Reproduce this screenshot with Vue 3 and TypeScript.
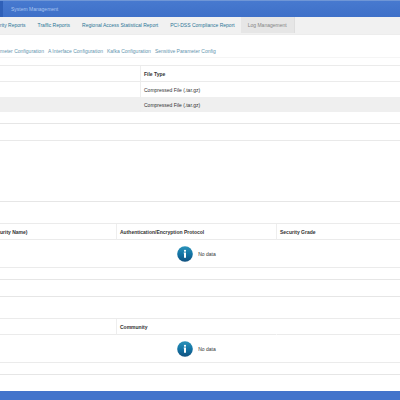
<script setup lang="ts">
interface Tab {
  label: string
  active?: boolean
}

const tabs: Tab[] = [
  { label: 'rity Reports' },
  { label: 'Traffic Reports' },
  { label: 'Regional Access Statistical Report' },
  { label: 'PCI-DSS Compliance Report' },
  { label: 'Log Management', active: true },
]

const links: string[] = [
  'meter Configuration',
  'A Interface Configuration',
  'Kafka Configuration',
  'Sensitive Parameter Config',
]

const files: string[] = ['Compressed File (.tar.gz)', 'Compressed File (.tar.gz)']

const lists = [
  { name: 'users', columns: ['urity Name)', 'Authentication/Encryption Protocol', 'Security Grade'] },
  { name: 'communities', columns: ['', 'Community', ''] },
]
</script>

<template>
  <div class="page">
    <header class="topbar">
      <span class="topbar-edge"></span>
      <a href="#" class="topbar-link">System Management</a>
    </header>

    <nav class="tabs">
      <a v-for="tab in tabs" :key="tab.label" href="#" class="tab" :class="{ active: tab.active }">{{ tab.label }}</a>
    </nav>

    <nav class="links">
      <a v-for="link in links" :key="link" href="#">{{ link }}</a>
    </nav>

    <main class="content">
      <table class="grid files">
        <thead>
          <tr>
            <th class="file-name"></th>
            <th>File Type</th>
          </tr>
        </thead>
        <tbody>
          <tr v-for="(file, i) in files" :key="i">
            <td></td>
            <td>{{ file }}</td>
          </tr>
        </tbody>
      </table>
      <div class="gap"></div>
      <div class="bar"></div>
      <div class="form"></div>

      <section v-for="list in lists" :key="list.name" class="list">
        <div class="toolbar"></div>
        <table class="grid">
          <thead>
            <tr>
              <th v-for="(column, i) in list.columns" :key="i" :class="'col' + i">{{ column }}</th>
            </tr>
          </thead>
          <tbody>
            <tr>
              <td colspan="3" class="empty">
                <div class="notice">
                  <svg viewBox="0 0 16 16" aria-hidden="true">
                    <defs>
                      <linearGradient :id="'info-' + list.name" x1="0" y1="0" x2="0" y2="1">
                        <stop offset="0" stop-color="#2b93b9" />
                        <stop offset="0.5" stop-color="#1374a5" />
                        <stop offset="1" stop-color="#12517f" />
                      </linearGradient>
                    </defs>
                    <circle cx="8" cy="8" r="7.8" :fill="`url(#info-${list.name})`" />
                    <circle cx="8" cy="4.8" r="1.1" fill="#fff" />
                    <path d="M6.7 6.6h2.3v5.2H7V7.5h-.3z" fill="#fff" />
                  </svg>
                  <span>No data</span>
                </div>
              </td>
            </tr>
          </tbody>
        </table>
        <div class="divider"></div>
      </section>
    </main>

    <footer class="footer"></footer>
  </div>
</template>

<style>
body {
  margin: 0;
}
</style>

<style scoped>
.page {
  display: flex;
  flex-direction: column;
  min-height: 100vh;
  overflow: hidden;
  background: #fff;
  color: #333;
  font: 5px/8px "Liberation Sans", Arial, sans-serif;
}

.page * {
  box-sizing: border-box;
}

a {
  text-decoration: none;
  white-space: nowrap;
}

.topbar {
  display: flex;
  align-items: center;
  gap: 8px;
  height: 17px;
  border-top: 1px solid #6f96d6;
  background: linear-gradient(#4779cf, #3e70c8);
}

.topbar-edge {
  width: 3px;
  height: 100%;
  background: #2f60b8;
}

.topbar-link {
  color: #a9c5f0;
}

.tabs {
  display: flex;
  height: 18px;
  padding-bottom: 1px;
  border-bottom: 1px solid #ededed;
  background: #f1f1f1;
}

.tab {
  padding: 4px 6px;
  color: #2c7697;
}

.tab:first-child {
  padding-left: 0;
}

.tab.active {
  padding: 4px 7px;
  border-right: 1px solid #dedede;
  background: #e6e6e6;
  color: #858585;
}

.links {
  display: flex;
  gap: 4px;
  height: 23px;
  margin-bottom: 7px;
  padding-top: 12px;
  border-bottom: 1px solid #f5f5f5;
}

.links a {
  color: #6594ae;
}

.content {
  flex: 1;
}

.grid {
  width: 100%;
  border-top: 1px solid #ebebeb;
  border-spacing: 0;
  table-layout: fixed;
}

.grid th,
.grid td {
  height: 15px;
  padding: 0 3px;
  text-align: left;
  white-space: nowrap;
}

.grid th {
  height: 16px;
  border-bottom: 1px solid #ebebeb;
}

.grid th:first-child {
  padding-left: 0;
}

.grid th + th,
.files td + td {
  border-left: 1px solid #eee;
}

.files tbody tr:nth-child(even) {
  background: #efefef;
}

.file-name {
  width: 35%;
}

.col0 {
  width: 29%;
}

.col1 {
  width: 40%;
}

.list + .list .grid th + th + th {
  border-left-color: transparent;
}

.gap {
  height: 11px;
}

.bar {
  height: 18px;
  border-top: 1px solid #e6e6e6;
  border-bottom: 1px solid #e9e9e9;
}

.form {
  height: 60px;
}

.toolbar {
  height: 22px;
  border-top: 1px solid #e6e6e6;
}

.grid .empty {
  height: 28px;
  border-bottom: 1px solid #ebebeb;
}

.notice {
  display: flex;
  align-items: center;
  justify-content: center;
  gap: 5px;
  padding-right: 7px;
}

.notice svg {
  width: 16px;
  height: 16px;
}

.divider {
  height: 17px;
  margin-top: 11px;
  border-top: 1px solid #e6e6e6;
}

.footer {
  height: 10px;
  background: #4374cb;
}
</style>
